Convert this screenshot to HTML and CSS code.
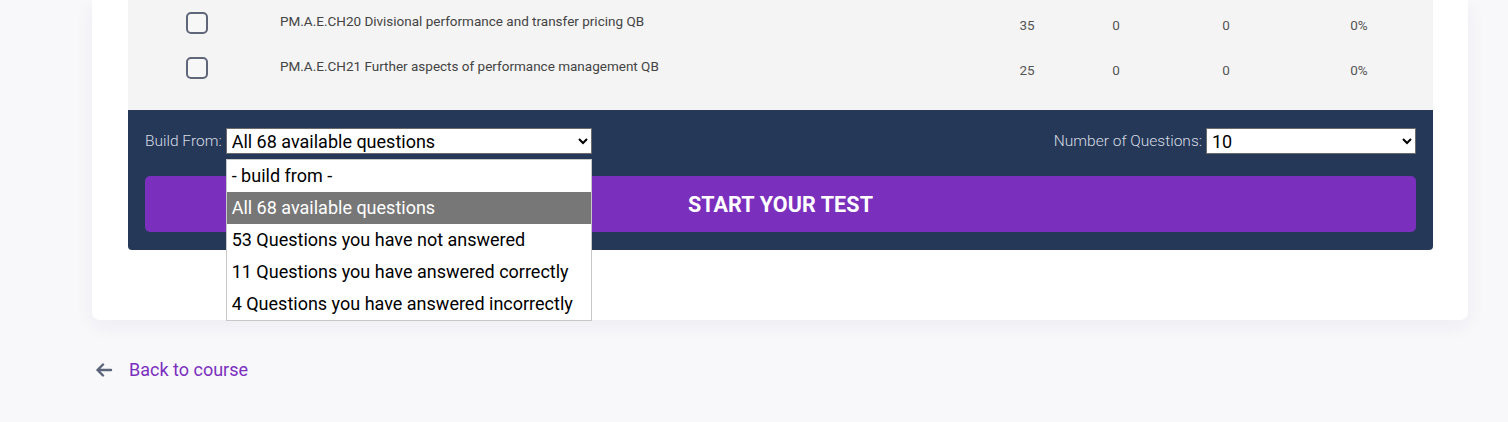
FILE: index.html
```html
<!DOCTYPE html>
<html>
<head>
<meta charset="utf-8">
<link rel="stylesheet" href="styles.css">
</head>
<body>
<div class="page">
  <div class="card">
    <div class="table">
      <div class="row">
        <div class="cell-check"><span class="checkbox"></span></div>
        <div class="cell-name">PM.A.E.CH20 Divisional performance and transfer pricing QB</div>
        <div class="cell-num">35</div>
        <div class="cell-num">0</div>
        <div class="cell-num">0</div>
        <div class="cell-num">0%</div>
      </div>
      <div class="row">
        <div class="cell-check"><span class="checkbox"></span></div>
        <div class="cell-name">PM.A.E.CH21 Further aspects of performance management QB</div>
        <div class="cell-num">25</div>
        <div class="cell-num">0</div>
        <div class="cell-num">0</div>
        <div class="cell-num">0%</div>
      </div>
    </div>
    <div class="panel">
      <div class="controls">
        <div class="field field-build">
          <label class="field-label">Build From:</label>
          <div class="select-wrap">
            <select class="select select-build">
              <option>- build from -</option>
              <option selected>All 68 available questions</option>
              <option>53 Questions you have not answered</option>
              <option>11 Questions you have answered correctly</option>
              <option>4 Questions you have answered incorrectly</option>
            </select>
            <ul class="dropdown">
              <li class="opt">- build from -</li>
              <li class="opt opt-active">All 68 available questions</li>
              <li class="opt">53 Questions you have not answered</li>
              <li class="opt">11 Questions you have answered correctly</li>
              <li class="opt">4 Questions you have answered incorrectly</li>
            </ul>
          </div>
        </div>
        <div class="field">
          <label class="field-label">Number of Questions:</label>
          <select class="select select-num">
            <option selected>10</option>
            <option>20</option>
            <option>30</option>
          </select>
        </div>
      </div>
      <button class="start">START YOUR TEST</button>
    </div>
  </div>
  <a class="back" href="#">
    <svg class="back-arrow" width="18" height="14" viewBox="0 0 18 14"><path d="M16 7H2.5M8 1.5L2.5 7L8 12.5" fill="none" stroke="#5a6378" stroke-width="2.4" stroke-linecap="round" stroke-linejoin="round"/></svg>
    <span>Back to course</span>
  </a>
</div>
</body>
</html>
```

FILE: styles.css
```css
* { box-sizing: border-box; }
html, body { margin: 0; padding: 0; }
body {
  background: #f8f8fb;
  font-family: Roboto, "Liberation Sans", sans-serif;
  height: 422px;
  overflow: hidden;
}
.page {
  padding: 0 40px 0 92px;
}
.card {
  background: #fff;
  border-radius: 0 0 8px 8px;
  padding: 0 35px 70px 36px;
  box-shadow: 0 6px 20px rgba(30, 40, 80, 0.05);
}
.table {
  background: #f4f4f4;
  height: 110px;
}
.row {
  display: grid;
  grid-template-columns: 138px 711px 100px 78px 142px 124px 1fr;
  height: 45px;
  align-items: start;
}
.cell-check {
  display: flex;
  justify-content: center;
  padding-top: 12px;
}
.checkbox {
  width: 22px;
  height: 22px;
  border: 2px solid #5f6679;
  border-radius: 5px;
  background: #f7f7f7;
}
.cell-name {
  padding: 12px 0 0 14px;
  font-size: 13.5px;
  line-height: 18px;
  color: #444;
}
.cell-num {
  padding-top: 16px;
  text-align: center;
  font-size: 13.5px;
  line-height: 18px;
  color: #555;
}
.panel {
  background: #253858;
  border-radius: 0 0 4px 4px;
  padding: 18px 17px 18px 17px;
}
.controls {
  display: flex;
  justify-content: space-between;
  align-items: center;
  height: 26px;
}
.field {
  display: flex;
  align-items: center;
  gap: 4px;
}
.field-label {
  font-size: 15.5px;
  font-weight: 300;
  color: #d7dbe4;
}
.select-wrap {
  position: relative;
}
.select {
  height: 26px;
  font-family: Roboto, "Liberation Sans", sans-serif;
  font-size: 18px;
  color: #000;
  background: #fff;
  border: 1px solid #6b6b6b;
  border-radius: 0;
  padding: 0 0 0 1px;
}
.select-build { width: 366px; }
.select-num { width: 210px; }
.dropdown {
  position: absolute;
  left: 0;
  top: 31px;
  width: 366px;
  margin: 0;
  padding: 0;
  list-style: none;
  background: #fff;
  border: 1px solid #c8c8c8;
  z-index: 5;
}
.opt {
  height: 32px;
  line-height: 32px;
  padding-left: 5px;
  font-size: 18px;
  color: #000;
  white-space: nowrap;
}
.opt-active {
  background: #777;
  color: #fff;
}
.start {
  display: block;
  width: 100%;
  height: 56px;
  margin-top: 22px;
  background: #7b30bd;
  border: none;
  border-radius: 5px;
  color: #fff;
  font-family: Roboto, "Liberation Sans", sans-serif;
  font-size: 21.5px;
  font-weight: 700;
  letter-spacing: 0.1px;
}
.back {
  display: inline-flex;
  align-items: center;
  gap: 16px;
  margin: 38px 0 0 3px;
  text-decoration: none;
  color: #7b30bd;
  font-size: 18px;
  line-height: 24px;
}
.back-arrow { display: block; }
```
